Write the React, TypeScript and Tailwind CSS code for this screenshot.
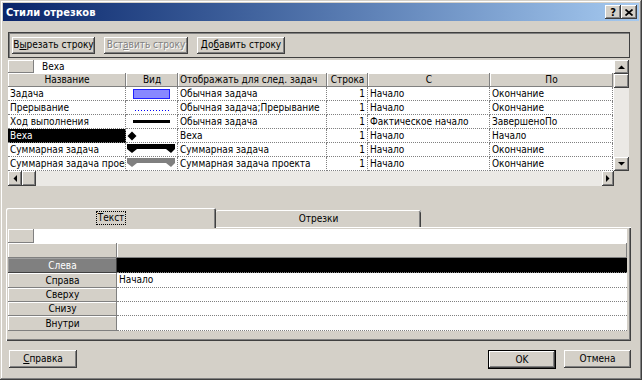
import React from "react";

const raised =
  "bg-[#d4d0c8] shadow-[inset_-1px_-1px_#404040,inset_1px_1px_#ffffff,inset_-2px_-2px_#808080,inset_2px_2px_#d4d0c8]";
const thin = "bg-[#d4d0c8] shadow-[inset_-1px_-1px_#808080,inset_1px_1px_#ffffff]";

type Dir = "up" | "down" | "left" | "right";

function Arrow({ dir, className }: { dir: Dir; className: string }) {
  const pts: Record<Dir, string> = {
    up: "0,4 7,4 3.5,0.5",
    down: "0,0 7,0 3.5,3.5",
    left: "4,0 4,7 0.5,3.5",
    right: "0,0 0,7 3.5,3.5",
  };
  const vertical = dir === "up" || dir === "down";
  return (
    <div className={`${raised} flex items-center justify-center ${className}`}>
      <svg width={vertical ? 7 : 4} height={vertical ? 4 : 7}>
        <polygon points={pts[dir]} fill="#000" />
      </svg>
    </div>
  );
}

function Btn({ children, className, disabled }: { children: React.ReactNode; className: string; disabled?: boolean }) {
  return (
    <div
      className={`${raised} flex items-center justify-center ${className} ${
        disabled ? "text-[#808080] [text-shadow:1px_1px_#ffffff]" : "text-black"
      }`}
    >
      <span className="whitespace-nowrap">{children}</span>
    </div>
  );
}

function VidCell({ kind }: { kind: string }) {
  return (
    <svg width="52" height="13" className="block">
      {kind === "bar" && <rect x="7.5" y="2.5" width="36" height="9" fill="#8888ff" stroke="#2020ff" />}
      {kind === "dots" && (
        <line x1="9" y1="9.5" x2="44" y2="9.5" stroke="#0000ff" strokeWidth="1" strokeDasharray="1 2" />
      )}
      {kind === "line" && <rect x="7" y="5" width="37" height="3" fill="#000" />}
      {kind === "diamond" && <polygon points="1.5,7 6,2.5 10.5,7 6,11.5" fill="#000" />}
      {kind === "summary" && (
        <polygon points="1,1 49,1 49,6 45,10 40,6 11,6 6,10 1,6" fill="#000" />
      )}
      {kind === "project" && (
        <polygon points="1,1 49,1 49,6 45,10 40,6 11,6 6,10 1,6" fill="#808080" />
      )}
    </svg>
  );
}

const widths = ["w-[118px]", "w-[52px]", "w-[149px]", "w-[41px]", "w-[122px]", "w-[123px]"];

const rows = [
  ["Задача", "bar", "Обычная задача", "1", "Начало", "Окончание"],
  ["Прерывание", "dots", "Обычная задача;Прерывание", "1", "Начало", "Окончание"],
  ["Ход выполнения", "line", "Обычная задача", "1", "Фактическое начало", "ЗавершеноПо"],
  ["Веха", "diamond", "Веха", "1", "Начало", "Начало"],
  ["Суммарная задача", "summary", "Суммарная задача", "1", "Начало", "Окончание"],
  ["Суммарная задача проекта", "project", "Суммарная задача проекта", "1", "Начало", "Окончание"],
];

const cell = "h-full shrink-0 flex items-center overflow-hidden whitespace-nowrap border-r border-b border-dotted border-[#808080]";

export default function App() {
  return (
    <div className="w-[642px] h-[380px] overflow-hidden bg-[#d4d0c8] p-[3px] flex flex-col font-['DejaVu_Sans_Condensed','DejaVu_Sans',sans-serif] text-[10px] leading-none text-black shadow-[inset_-1px_-1px_#404040,inset_1px_1px_#d4d0c8,inset_-2px_-2px_#808080,inset_2px_2px_#ffffff]">
      {/* title bar */}
      <div className="h-[18px] shrink-0 flex items-center pl-[3px] pr-[2px] bg-linear-to-r from-[#0a246a] to-[#a6caf0]">
        <span className="flex-1 text-white font-bold text-[11px]">Стили отрезков</span>
        <div className="flex">
          <Btn className="w-[16px] h-[14px] font-bold text-[11px]">?</Btn>
          <Btn className="w-[16px] h-[14px]">
            <svg width="8" height="7" className="block">
              <path d="M0.5 0.5 L7.5 6.5 M7.5 0.5 L0.5 6.5" stroke="#000" strokeWidth="1.7" />
            </svg>
          </Btn>
        </div>
      </div>

      {/* toolbar */}
      <div className="mt-[11px] ml-[5px] w-[622px] h-[26px] shrink-0 border border-[#404040] shadow-[inset_1px_1px_#808080] flex items-center gap-[9px] pl-[3px]">
        <Btn className="w-[83px] h-[17px]">
          В<u>ы</u>резать строку
        </Btn>
        <Btn className="w-[84px] h-[17px]" disabled>
          Вст<u>а</u>вить строку
        </Btn>
        <Btn className="w-[88px] h-[17px]">
          До<u>б</u>авить строку
        </Btn>
      </div>

      {/* styles grid */}
      <div className="mt-[2px] ml-[5px] w-[621px] shrink-0 flex flex-col">
        <div className="flex">
          <div className="w-[606px] flex flex-col">
            <div className="h-[13px] flex">
              <div className={`${thin} w-[26px]`} />
              <div className="flex-1 bg-white flex items-center pl-[8px]">Веха</div>
            </div>
            <div className="h-[14px] flex">
              {["Название", "Вид", "Отображать для след. задач", "Строка", "С", "По"].map((h, i) => (
                <div
                  key={h}
                  className={`${thin} ${widths[i]} h-full flex items-center whitespace-nowrap overflow-hidden ${
                    i === 2 ? "pl-[2px]" : "justify-center"
                  }`}
                >
                  {h}
                </div>
              ))}
            </div>
            {rows.map((r, ri) => (
              <div key={ri} className="h-[14px] flex bg-white">
                <div className={`${cell} ${widths[0]} pl-[2px] ${ri === 3 ? "bg-black text-white" : ""}`}>{r[0]}</div>
                <div className={`${cell} ${widths[1]}`}>
                  <VidCell kind={r[1]} />
                </div>
                <div className={`${cell} ${widths[2]} pl-[2px]`}>{r[2]}</div>
                <div className={`${cell} ${widths[3]} justify-end pr-[2px]`}>{r[3]}</div>
                <div className={`${cell} ${widths[4]} pl-[2px]`}>{r[4]}</div>
                <div className={`${cell} ${widths[5]} pl-[2px]`}>{r[5]}</div>
              </div>
            ))}
          </div>
          <div className="w-[15px] flex flex-col bg-[#ebe9e5]">
            <Arrow dir="up" className="h-[14px]" />
            <div className={`${raised} h-[14px]`} />
            <div className="flex-1" />
            <Arrow dir="down" className="h-[14px]" />
          </div>
        </div>
        <div className="flex h-[15px]">
          <div className="w-[606px] flex bg-[#ebe9e5]">
            <Arrow dir="left" className="w-[14px]" />
            <div className={`${raised} w-[14px]`} />
            <div className="flex-1" />
            <Arrow dir="right" className="w-[12px]" />
          </div>
          <div className="w-[15px] bg-[#d4d0c8]" />
        </div>
      </div>

      {/* tabs */}
      <div className="mt-[22px] ml-[3px] h-[19px] shrink-0 flex items-end">
        <div className="relative z-10 w-[210px] h-[20px] -mb-px bg-[#d4d0c8] rounded-t-[2px] shadow-[inset_1px_1px_#ffffff,inset_-1px_0_#404040,inset_-2px_0_#808080] flex items-center justify-center pb-[1px]">
          <span className="outline-1 outline-dotted outline-black px-[1px] py-[1px]">Текст</span>
        </div>
        <div className="w-[205px] h-[17px] bg-[#d4d0c8] rounded-t-[2px] shadow-[inset_0_1px_#ffffff,inset_-1px_0_#404040,inset_-2px_0_#808080] flex items-center justify-center">
          Отрезки
        </div>
      </div>

      {/* tab panel */}
      <div className="ml-[3px] w-[625px] h-[114px] shrink-0 p-[2px] shadow-[inset_1px_1px_#ffffff,inset_-1px_-1px_#404040,inset_-2px_-2px_#808080]">
        <div className="w-[619px] flex flex-col">
          <div className="h-[14px] flex">
            <div className={`${thin} w-[26px]`} />
            <div className="flex-1 bg-white" />
          </div>
          <div className="h-[15px] flex">
            <div className={`${thin} w-[109px]`} />
            <div className={`${thin} flex-1`} />
          </div>
          {[
            ["Слева", "", "h-[15px]"],
            ["Справа", "Начало", "h-[15px]"],
            ["Сверху", "", "h-[14px]"],
            ["Снизу", "", "h-[14px]"],
            ["Внутри", "", "h-[15px]"],
          ].map(([label, val, h], i) => (
            <div key={label} className={`${h} flex`}>
              <div
                className={`w-[109px] flex items-center justify-center ${
                  i === 0
                    ? "bg-[#808080] text-white shadow-[inset_-1px_-1px_#404040,inset_1px_1px_#a0a0a0]"
                    : thin
                }`}
              >
                {label}
              </div>
              <div
                className={`flex-1 flex items-center pl-[2px] border-b border-dotted border-[#808080] ${
                  i === 0 ? "bg-black" : "bg-white"
                }`}
              >
                {val}
              </div>
            </div>
          ))}
        </div>
      </div>

      {/* bottom buttons */}
      <div className="mt-[9px] h-[18px] shrink-0 flex">
        <Btn className="ml-[6px] w-[68px] h-[18px]">
          <u>С</u>правка
        </Btn>
        <div className="ml-auto w-[68px] h-[19px] border border-black">
          <Btn className="w-full h-full">OK</Btn>
        </div>
        <Btn className="ml-[8px] mr-[8px] w-[67px] h-[18px]">Отмена</Btn>
      </div>
    </div>
  );
}
